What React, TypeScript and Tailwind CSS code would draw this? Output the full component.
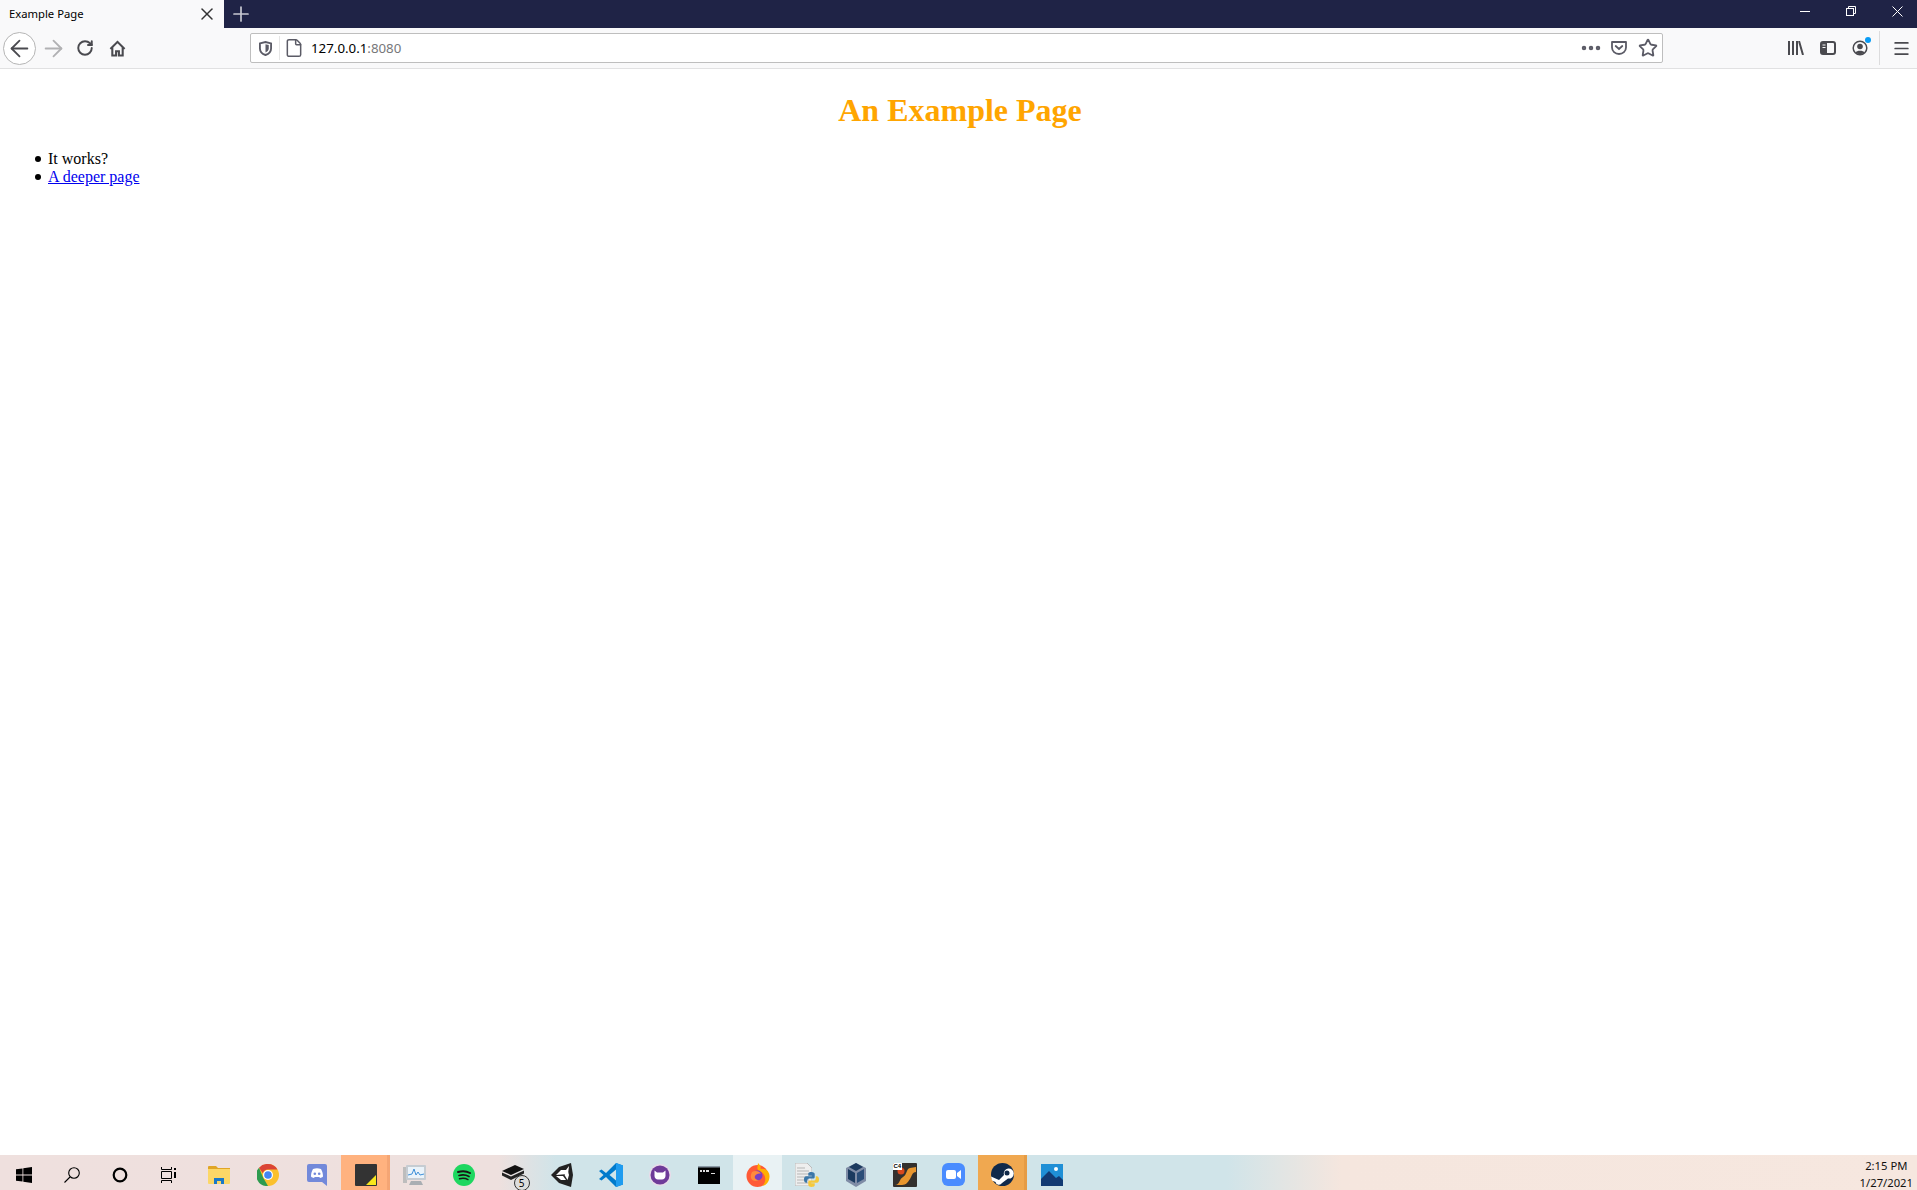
import { ArrowLeft, ArrowRight, RotateCw, X, Plus, Star, MoreHorizontal, File, Menu } from "lucide-react";
import type { ReactNode } from "react";

const Slot = ({ children, className = "w-[49px]" }: { children: ReactNode; className?: string }) => (
  <div className={`h-full shrink-0 flex items-center justify-center pt-[4px] ${className}`}>{children}</div>
);

const Home = () => (
  <svg width="17" height="17" viewBox="0 0 18 18" fill="none" stroke="#4a4a4f" strokeWidth="2.200">
    <path d="M1.500 9.500 9 2l7.500 7.500" />
    <path d="M3.500 8v8.500h4V12h3v4.500h4V8" />
  </svg>
);

const Shield = () => (
  <svg width="13" height="15" viewBox="0 0 14 16" fill="none">
    <path d="M1 2.500 7 1l6 1.500V8c0 3.500-3 6-6 7-3-1-6-3.500-6-7z" stroke="#5b5b66" strokeWidth="2" />
    <path d="M7 3.500 10.500 4.300V8c0 2-1.700 3.500-3.500 4.300z" fill="#5b5b66" />
  </svg>
);

const Pocket = () => (
  <svg width="16" height="14" viewBox="0 0 16 14" fill="none" stroke="#5b5b66" strokeWidth="1.800">
    <path d="M1 1h14v5.500a7 6.500 0 0 1-14 0z" strokeLinejoin="round" />
    <path d="m4.700 5 3.300 3 3.300-3" strokeLinecap="round" />
  </svg>
);

const Library = () => (
  <svg width="16" height="14" viewBox="0 0 16 14" stroke="#4a4a4f" strokeWidth="2" fill="none">
    <path d="M1 0v14M5 0v14M9 0v14M11 0l4 14" />
  </svg>
);

const Sidebar = () => (
  <svg width="16" height="14" viewBox="0 0 16 14">
    <rect x="1" y="1" width="14" height="12" rx="2" fill="none" stroke="#4a4a4f" strokeWidth="2" />
    <rect x="1" y="1" width="6" height="12" fill="#4a4a4f" />
    <path d="M2.500 4h3M2.500 6.500h3" stroke="#f9f9fa" />
  </svg>
);

const Account = () => (
  <div className="relative w-4 h-4">
    <svg width="16" height="16" viewBox="0 0 16 16">
      <circle cx="8" cy="8" r="6.800" fill="none" stroke="#4a4a4f" strokeWidth="1.500" />
      <circle cx="8" cy="6.500" r="2.800" fill="#4a4a4f" />
      <path d="M3.500 12.500c1-2.500 8-2.500 9 0-2 2-7 2-9 0z" fill="#4a4a4f" />
    </svg>
    <span className="absolute -top-[3px] -right-[3px] w-[6px] h-[6px] rounded-full bg-[#0a9cf5]" />
  </div>
);

const Restore = () => (
  <svg width="10" height="10" viewBox="0 0 10 10" fill="none" stroke="#fff">
    <rect x="0.500" y="2.500" width="7" height="7" />
    <path d="M2.500 2.500V.5h7v7h-2" />
  </svg>
);

const CloseThin = () => (
  <svg width="11" height="11" viewBox="0 0 11 11" fill="none" stroke="#fff">
    <path d="M.5.5l10 10M10.500.5l-10 10" />
  </svg>
);

const Windows = () => (
  <svg width="16" height="16" viewBox="0 0 16 16" fill="#000">
    <path d="M0 2.300 6.500 1.400v6.200H0zM7.300 1.300 16 0v7.600H7.300zM0 8.400h6.500v6.200L0 13.700zM7.300 8.400H16V16l-8.700-1.300z" />
  </svg>
);

const SearchGlass = () => (
  <svg width="16" height="16" viewBox="0 0 16 16" fill="none" stroke="#000" strokeWidth="1.100">
    <circle cx="10" cy="6" r="5.300" />
    <path d="M6 10 .5 15.500" />
  </svg>
);

const Cortana = () => (
  <svg width="16" height="16" viewBox="0 0 16 16" fill="none" stroke="#000" strokeWidth="2.200">
    <circle cx="8" cy="8" r="6.300" />
  </svg>
);

const TaskView = () => (
  <svg width="16" height="16" viewBox="0 0 16 16" fill="none" stroke="#000">
    <path d="M.5 0v2.500h10V0M.5 16v-2.500h10V16M.5 4.500h10v7H.5z" />
    <rect x="13" y="1" width="2" height="2" fill="#000" stroke="none" />
    <rect x="13" y="5" width="2" height="6" fill="#000" stroke="none" />
  </svg>
);

const Folder = () => (
  <svg width="22" height="18" viewBox="0 0 22 18">
    <path d="M0 1a1 1 0 0 1 1-1h7l2 2h12v3H0z" fill="#e0a526" />
    <path d="M0 3h22v14a1 1 0 0 1-1 1H1a1 1 0 0 1-1-1z" fill="#fcd767" />
    <path d="M6 18v-6h10v6h-3v-3H9v3z" fill="#1a78c8" />
  </svg>
);

const Chrome = () => (
  <svg width="22" height="22" viewBox="0 0 22 22">
    <circle cx="11" cy="11" r="11" fill="#fbc02d" />
    <path d="M11 0a11 11 0 0 1 9.500 5.500H11A5.500 5.500 0 0 0 5.800 9.300L2 3.700A11 11 0 0 1 11 0z" fill="#db4437" />
    <path d="M2 3.700 6.200 13.800 11 22A11 11 0 0 1 2 3.700z" fill="#2e9b4f" />
    <circle cx="11" cy="11" r="5" fill="#fff" />
    <circle cx="11" cy="11" r="3.800" fill="#4285f4" />
  </svg>
);

const Discord = () => (
  <svg width="20" height="22" viewBox="0 0 20 22">
    <path d="M2 0h16a2 2 0 0 1 2 2v20l-5-4H2a2 2 0 0 1-2-2V2a2 2 0 0 1 2-2z" fill="#7289da" />
    <path d="M6 5c3-1 5-1 8 0 1.500 2.500 2 5 2 7.500-1 1-2 1.300-3 1.500l-.700-1h-4.600L7 14c-1-.2-2-.5-3-1.500C4 10 4.500 7.500 6 5z" fill="#fff" />
    <circle cx="7.800" cy="9.800" r="1.300" fill="#7289da" />
    <circle cx="12.200" cy="9.800" r="1.300" fill="#7289da" />
  </svg>
);

const Sticky = () => (
  <svg width="22" height="22" viewBox="0 0 22 22">
    <rect width="22" height="22" rx="1" fill="#333" />
    <path d="M11 21 21 11v10z" fill="#f8e71c" />
  </svg>
);

const TaskMgr = () => (
  <svg width="24" height="22" viewBox="0 0 24 22">
    <rect x="0" y="3" width="4" height="16" fill="#bdbdbd" />
    <rect x="3" y="1" width="20" height="15" rx="1" fill="#c6ccd2" />
    <rect x="5" y="3" width="16" height="11" fill="#eaf3fa" />
    <path d="m5 11 4-1 2-5 2 6 2-3 2 3 4-1" fill="none" stroke="#3d8fd8" />
    <path d="M8 17h10l2 4H6z" fill="#a9aeb3" />
  </svg>
);

const Spotify = () => (
  <svg width="22" height="22" viewBox="0 0 22 22" fill="none" stroke="#191414" strokeLinecap="round">
    <circle cx="11" cy="11" r="11" fill="#1ed760" stroke="none" />
    <path d="M5 8c4-1.200 8.500-1 12 1" strokeWidth="2" />
    <path d="M6 11.500c3.500-1 7-.7 10 1" strokeWidth="1.700" />
    <path d="M6.500 14.800c3-.8 6-.6 8.500.8" strokeWidth="1.400" />
  </svg>
);

const Box = () => (
  <div className="relative w-[22px] h-[22px]">
    <svg width="22" height="16" viewBox="0 0 22 16" className="mt-[1px]">
      <path d="M0 6 13 0l9 4-13 6z" fill="#111" />
      <path d="M0 7.500 9 11.500 22 5.500v3L9 15 0 10.500z" fill="#222" />
    </svg>
    <span className="absolute -bottom-[5px] -right-[6px] w-4 h-4 rounded-full bg-[#ddd] border border-[#333] text-[10px] leading-[14px] text-center text-black font-['Noto_Sans',sans-serif]">
      5
    </span>
  </div>
);

const Unity = () => (
  <svg width="22" height="24" viewBox="0 0 22 24">
    <path d="M0 12 8 4 20 0l2 12-2 12-12-4z" fill="#222" />
    <path d="M5 12 10 7h5l3-4-1 8zM15 17h-5l-5-4h7l3 4 3 4z" fill="#fff" />
    <path d="m13.500 12 3-5 1.500 5-1.500 5z" fill="#fff" />
  </svg>
);

const VsCode = () => (
  <svg width="24" height="24" viewBox="0 0 24 24">
    <path d="M17 0 7 10 2.500 6.500 0 8l4.500 4L0 16l2.500 1.500L7 14l10 10 7-2.500v-19z" fill="#007acc" />
    <path d="M17 6.500 10.500 12l6.500 5.500z" fill="#d0e4e9" />
    <path d="M17 0l7 2.500v19L17 24z" fill="#1f9cf0" />
  </svg>
);

const GitHubDesktop = () => (
  <svg width="22" height="22" viewBox="0 0 22 22">
    <circle cx="11" cy="11" r="11" fill="#e7dbe9" />
    <circle cx="11" cy="11" r="9.500" fill="#6f3b99" />
    <path d="M5.500 6.500 8 8.500h6l2.500-2V12a4 4 0 0 1-3.500 3.500H9A4 4 0 0 1 5.500 12z" fill="#fff" />
  </svg>
);

const Terminal = () => (
  <svg width="22" height="18" viewBox="0 0 22 18">
    <rect width="22" height="18" fill="#000" />
    <rect width="22" height="1.500" fill="#8b9aa6" />
    <path d="M2 4h2v2H2zM5 4h2v2H5zM8 4h3v2H8zM13 7h4v1h-4z" fill="#ddd" />
  </svg>
);

const Firefox = () => (
  <svg width="24" height="24" viewBox="0 0 24 24">
    <circle cx="11.500" cy="13" r="11" fill="#ff5a36" />
    <path d="M12 0c3 3 3 4 2.500 6C20 5 24 9 23.500 14c-.5 5-3 8-7 9 3-3 4-8 1-12-2-3-5-3-6-5-.5-2 .5-4 .5-6z" fill="#ffb000" />
    <circle cx="11.500" cy="12.500" r="5" fill="#7b3fc4" />
    <path d="M6 9c3-2 8-1 9 2-2-1-5 0-6 2s1 4 4 4c-3 2-7 1-8-2-.500-2 0-4 1-6z" fill="#ff8a3d" />
  </svg>
);

const Python = () => (
  <div className="relative w-[24px] h-[24px]">
    <svg width="17" height="23" viewBox="0 0 17 23">
      <path d="M0 0h12l5 5v18H0z" fill="#eee" stroke="#bbb" />
      <path d="M2 5h8M2 8h12M2 11h12M2 14h12M2 17h12M2 20h12" stroke="#b5b5b5" />
    </svg>
    <svg width="15" height="15" viewBox="0 0 14 14" className="absolute right-0 bottom-0">
      <path d="M7 0c-3 0-3 1-3 2v1.500h3.500V4H2C.5 4 0 5.500 0 7c0 2 1 3 2 3h1V8c0-1 1-2 2-2h4c1 0 1-1 1-2V2c0-1-1-2-3-2z" fill="#3b77a8" />
      <path d="M7 14c3 0 3-1 3-2v-1.500H6.500V10H12c1.500 0 2-1.500 2-3 0-2-1-3-2-3h-1v2c0 1-1 2-2 2H5c-1 0-1 1-1 2v2c0 1 1 2 3 2z" fill="#f5c93c" />
    </svg>
  </div>
);

const VirtualBox = () => (
  <svg width="20" height="24" viewBox="0 0 20 24">
    <path d="M10 0 20 5v13l-10 6-10-6V5z" fill="#7f8ca6" />
    <path d="M3 4 10 0l7 4-7 4z" fill="#1b3a5f" />
    <path d="M2 6 9 10v10l-7-4z" fill="#1b3a5f" />
    <path d="M18 6 11 10v10l7-4z" fill="#2a4d78" />
  </svg>
);

const Cinema4d = () => (
  <div className="relative w-6 h-6 bg-[#33302e] overflow-hidden rounded-[1px]">
    <svg width="24" height="24" viewBox="0 0 24 24" className="absolute inset-0">
      <path d="M2 22c5 0 4-6 8-8s3-8 7-9l6-1v5c-4 0-4 4-6 7s-4 6-8 6z" fill="#e8962f" />
      <circle cx="8" cy="8" r="3.500" fill="#d9481c" />
    </svg>
    <span className="absolute left-0 top-0 bg-white text-black text-[6px] leading-[7px] px-[1px] font-bold font-['Liberation_Sans',sans-serif]">
      C4
    </span>
  </div>
);

const Zoom = () => (
  <svg width="23" height="23" viewBox="0 0 23 23">
    <rect width="23" height="23" rx="6" fill="#4a8cff" />
    <rect x="4" y="7" width="10" height="9" rx="2" fill="#fff" />
    <path d="m15 10 4-3v9l-4-3z" fill="#fff" />
  </svg>
);

const Steam = () => (
  <svg width="23" height="23" viewBox="0 0 23 23">
    <circle cx="11.500" cy="11.500" r="11.500" fill="#10294a" />
    <path d="M0 13.500 8 17l5-5a5 5 0 1 1 4 3.500l-6 4.500a3.500 3.500 0 0 1-6.500-1L1 17.500z" fill="#fff" />
    <circle cx="16" cy="10" r="2.500" fill="#10294a" />
  </svg>
);

const Photos = () => (
  <svg width="22" height="22" viewBox="0 0 22 22">
    <rect width="22" height="22" fill="#1f8fd6" />
    <path d="M0 15 8 7l7 7 3-2 4 4v6H0z" fill="#123a73" />
    <circle cx="15" cy="5" r="2" fill="#fff" />
  </svg>
);

const bullet =
  "relative before:content-[''] before:absolute before:-left-[13px] before:top-[6px] before:w-[6px] before:h-[6px] before:rounded-full before:bg-black";

export default function App() {
  return (
    <div className="h-[1190px] w-full flex flex-col bg-white overflow-hidden">
      {/* tab strip */}
      <div className="h-[28px] shrink-0 flex bg-[#1f2346] text-white">
        <div className="w-[224px] bg-[#f9f9fa] flex items-center pl-[9px] pr-[7px] text-black">
          <span className="flex-1 text-[11.25px] font-['Noto_Sans',sans-serif]">Example Page</span>
          <X size={20} color="#333" strokeWidth={1.800} />
        </div>
        <div className="w-[34px] flex items-center justify-center">
          <Plus size={24} color="#c8c9d2" strokeWidth={1.700} />
        </div>
        <div className="flex-1" />
        <div className="flex items-center pb-[6px]">
          <div className="w-[46px] flex justify-center"><span className="w-[10px] h-px bg-white" /></div>
          <div className="w-[46px] flex justify-center"><Restore /></div>
          <div className="w-[43px] pl-[3px] flex justify-center"><CloseThin /></div>
        </div>
      </div>

      {/* toolbar */}
      <div className="h-[41px] shrink-0 flex items-center bg-[#f9f9fa] border-b border-[#e1e1e2] pl-[3px]">
        <div className="w-[33px] h-[33px] shrink-0 rounded-full border border-[#b5b5b5] bg-white flex items-center justify-center">
          <ArrowLeft size={27} color="#4a4a4f" strokeWidth={1.600} />
        </div>
        <div className="w-[34px] flex justify-center"><ArrowRight size={27} color="#b1b1b3" strokeWidth={1.600} /></div>
        <div className="w-[30px] flex justify-center"><RotateCw size={18} color="#4a4a4f" strokeWidth={2.600} /></div>
        <div className="w-[34px] flex justify-center"><Home /></div>
        <div className="w-[116px] shrink-0" />
        <div className="w-[1413px] shrink-0 h-[30px] bg-white border border-[#bebebe] rounded-[2px] flex items-center font-['Noto_Sans',sans-serif] text-[13.300px]">
          <div className="w-[28px] flex justify-center"><Shield /></div>
          <div className="w-px h-[24px] bg-[#e6e6e6]" />
          <div className="w-[31px] pr-[3px] flex justify-center"><File size={20} color="#5b5b66" strokeWidth={1.800} /></div>
          <span className="text-black mt-[2px]">127.0.0.1</span>
          <span className="text-[#77777a] mt-[2px]">:8080</span>
          <div className="flex-1" />
          <div className="w-[28px] flex justify-center"><MoreHorizontal size={24} color="#5b5b66" strokeWidth={2.500} /></div>
          <div className="w-[28px] flex justify-center"><Pocket /></div>
          <div className="w-[29px] flex justify-center"><Star size={20} color="#5b5b66" strokeWidth={2.200} /></div>
        </div>
        <div className="w-[117px] shrink-0" />
        <div className="w-[32px] flex justify-center"><Library /></div>
        <div className="w-[32px] flex justify-center"><Sidebar /></div>
        <div className="w-[32px] flex justify-center"><Account /></div>
        <div className="w-[3px]" />
        <div className="w-px h-[34px] bg-[#dcdcdd]" />
        <div className="w-[37px] pl-[5px] flex justify-center"><Menu size={19} color="#4a4a4f" strokeWidth={2.200} /></div>
      </div>

      {/* page */}
      <main className="flex-1 pt-[23px] font-['Liberation_Serif',serif] text-[16px] leading-[18px] text-black">
        <h1 className="text-[32px] leading-[37px] font-bold text-center text-[#ffa500] mb-[21px] pl-[3px]">An Example Page</h1>
        <ul className="pl-[48px]">
          <li className={bullet}>It works?</li>
          <li className={bullet}><a href="#" className="text-[#0000ee] underline">A deeper page</a></li>
        </ul>
      </main>

      {/* taskbar */}
      <div className="h-[35px] shrink-0 flex items-center bg-[linear-gradient(90deg,#efe0de_0%,#eee0de_26%,#d0e4e9_29%,#d0e4e9_64%,#f5e6de_70%,#f6e7df_100%)]">
        <div className="flex h-full">
          <Slot className="w-[48px]"><Windows /></Slot>
          <Slot className="w-[48px]"><SearchGlass /></Slot>
          <Slot className="w-[48px]"><Cortana /></Slot>
          <Slot className="w-[50px]"><TaskView /></Slot>
          <Slot><Folder /></Slot>
          <Slot><Chrome /></Slot>
          <Slot><Discord /></Slot>
          <Slot className="w-[49px] bg-[#ffb27f] border-r-[3px] border-[#f4a574] pl-[3px]"><Sticky /></Slot>
          <Slot><TaskMgr /></Slot>
          <Slot><Spotify /></Slot>
          <Slot><Box /></Slot>
          <Slot><Unity /></Slot>
          <Slot><VsCode /></Slot>
          <Slot><GitHubDesktop /></Slot>
          <Slot><Terminal /></Slot>
          <Slot className="w-[49px] bg-[#e9f2f4]"><Firefox /></Slot>
          <Slot><Python /></Slot>
          <Slot><VirtualBox /></Slot>
          <Slot><Cinema4d /></Slot>
          <Slot><Zoom /></Slot>
          <Slot className="w-[49px] bg-[#f0a850] border-r-[3px] border-[#e59c46] pl-[3px]"><Steam /></Slot>
          <Slot><Photos /></Slot>
        </div>
        <div className="flex-1" />
        <div className="pr-[4px] pt-[3px] text-center text-[11.25px] leading-[17px] text-[#111] font-['Noto_Sans',sans-serif]">
          <div>2:15 PM</div>
          <div>1/27/2021</div>
        </div>
      </div>
    </div>
  );
}
